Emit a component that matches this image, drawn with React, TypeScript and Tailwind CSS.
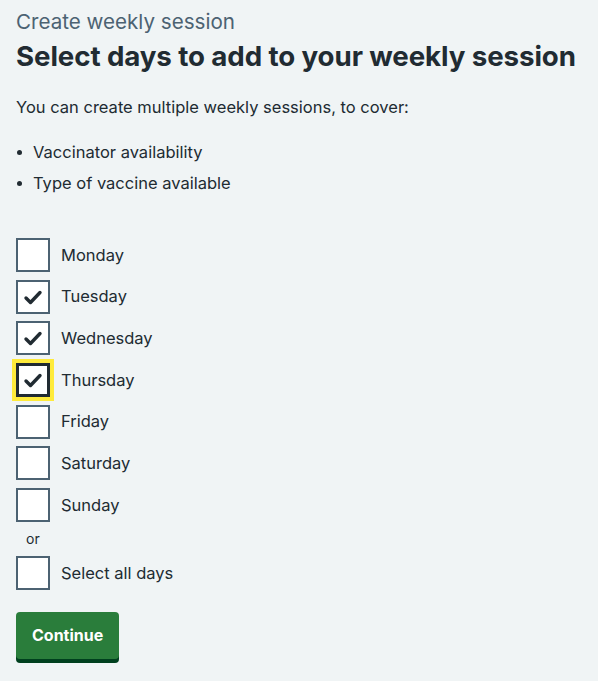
import React, { useState } from 'react';

const days = ['Monday', 'Tuesday', 'Wednesday', 'Thursday', 'Friday', 'Saturday', 'Sunday'];

const CheckRow = ({ label, checked, focused, onToggle }: { label: string; checked: boolean; focused?: boolean; onToggle: () => void }) => (
  <label className="flex items-center gap-[11px] cursor-pointer h-[34px]" onClick={onToggle}>
    <span
      className={`relative flex-shrink-0 w-[34px] h-[34px] bg-white flex items-center justify-center ${
        focused ? 'border-[3px] border-[#212b32] outline-[4px] outline-solid outline-[#ffeb3b]' : 'border-2 border-[#4c6272]'
      }`}
    >
      {checked && (
        <svg width="34" height="34" viewBox="0 0 34 34" className="absolute left-[-2px] top-[-2px]" style={focused ? { left: -3, top: -3 } : undefined}>
          <path d="M10 18 L14.5 22.5 L24 12.5" fill="none" stroke="#212b32" strokeWidth="3.4" strokeLinecap="round" strokeLinejoin="round" />
        </svg>
      )}
    </span>
    <span className="text-[16.5px] text-[#212b32]">{label}</span>
  </label>
);

export default function App() {
  const [selected, setSelected] = useState<Record<string, boolean>>({ Tuesday: true, Wednesday: true, Thursday: true });
  const [all, setAll] = useState(false);

  const toggle = (d: string) => setSelected(s => ({ ...s, [d]: !s[d] }));

  return (
    <div className="min-h-screen bg-[#f0f4f5] px-4 pt-[8px] pb-6 text-[#212b32]" style={{ fontFamily: 'Inter, "Noto Sans", sans-serif' }}>
      <div className="text-[20.6px] leading-[28px] text-[#4c6272]">Create weekly session</div>
      <h1 className="text-[27.7px] leading-[36px] font-bold mt-[2px] tracking-[-0.1px]">Select days to add to your weekly session</h1>
      <p className="text-[16.5px] leading-[26px] mt-[20px]">You can create multiple weekly sessions, to cover:</p>
      <ul className="mt-[19px] text-[16.5px] leading-[26px]">
        <li className="flex items-center gap-[11px] pl-[1px]">
          <span className="w-[5px] h-[5px] rounded-full bg-[#212b32] mt-[1px]" />
          Vaccinator availability
        </li>
        <li className="flex items-center gap-[11px] pl-[1px] mt-[5px]">
          <span className="w-[5px] h-[5px] rounded-full bg-[#212b32] mt-[1px]" />
          Type of vaccine available
        </li>
      </ul>

      <div className="mt-[42px] flex flex-col gap-[7.7px]">
        {days.map(d => (
          <CheckRow key={d} label={d} checked={!!selected[d]} focused={d === 'Thursday'} onToggle={() => toggle(d)} />
        ))}
      </div>
      <div className="text-[14px] leading-[18px] pl-[10px] mt-[8px] text-[#212b32]">or</div>
      <div className="mt-[8px]">
        <CheckRow label="Select all days" checked={all} onToggle={() => setAll(!all)} />
      </div>

      <button className="mt-[22px] bg-[#2a7d3b] text-white font-bold text-[16px] leading-[23px] px-4 py-[12px] rounded-[4px] shadow-[0_4px_0_#00401e]">
        Continue
      </button>
    </div>
  );
}
